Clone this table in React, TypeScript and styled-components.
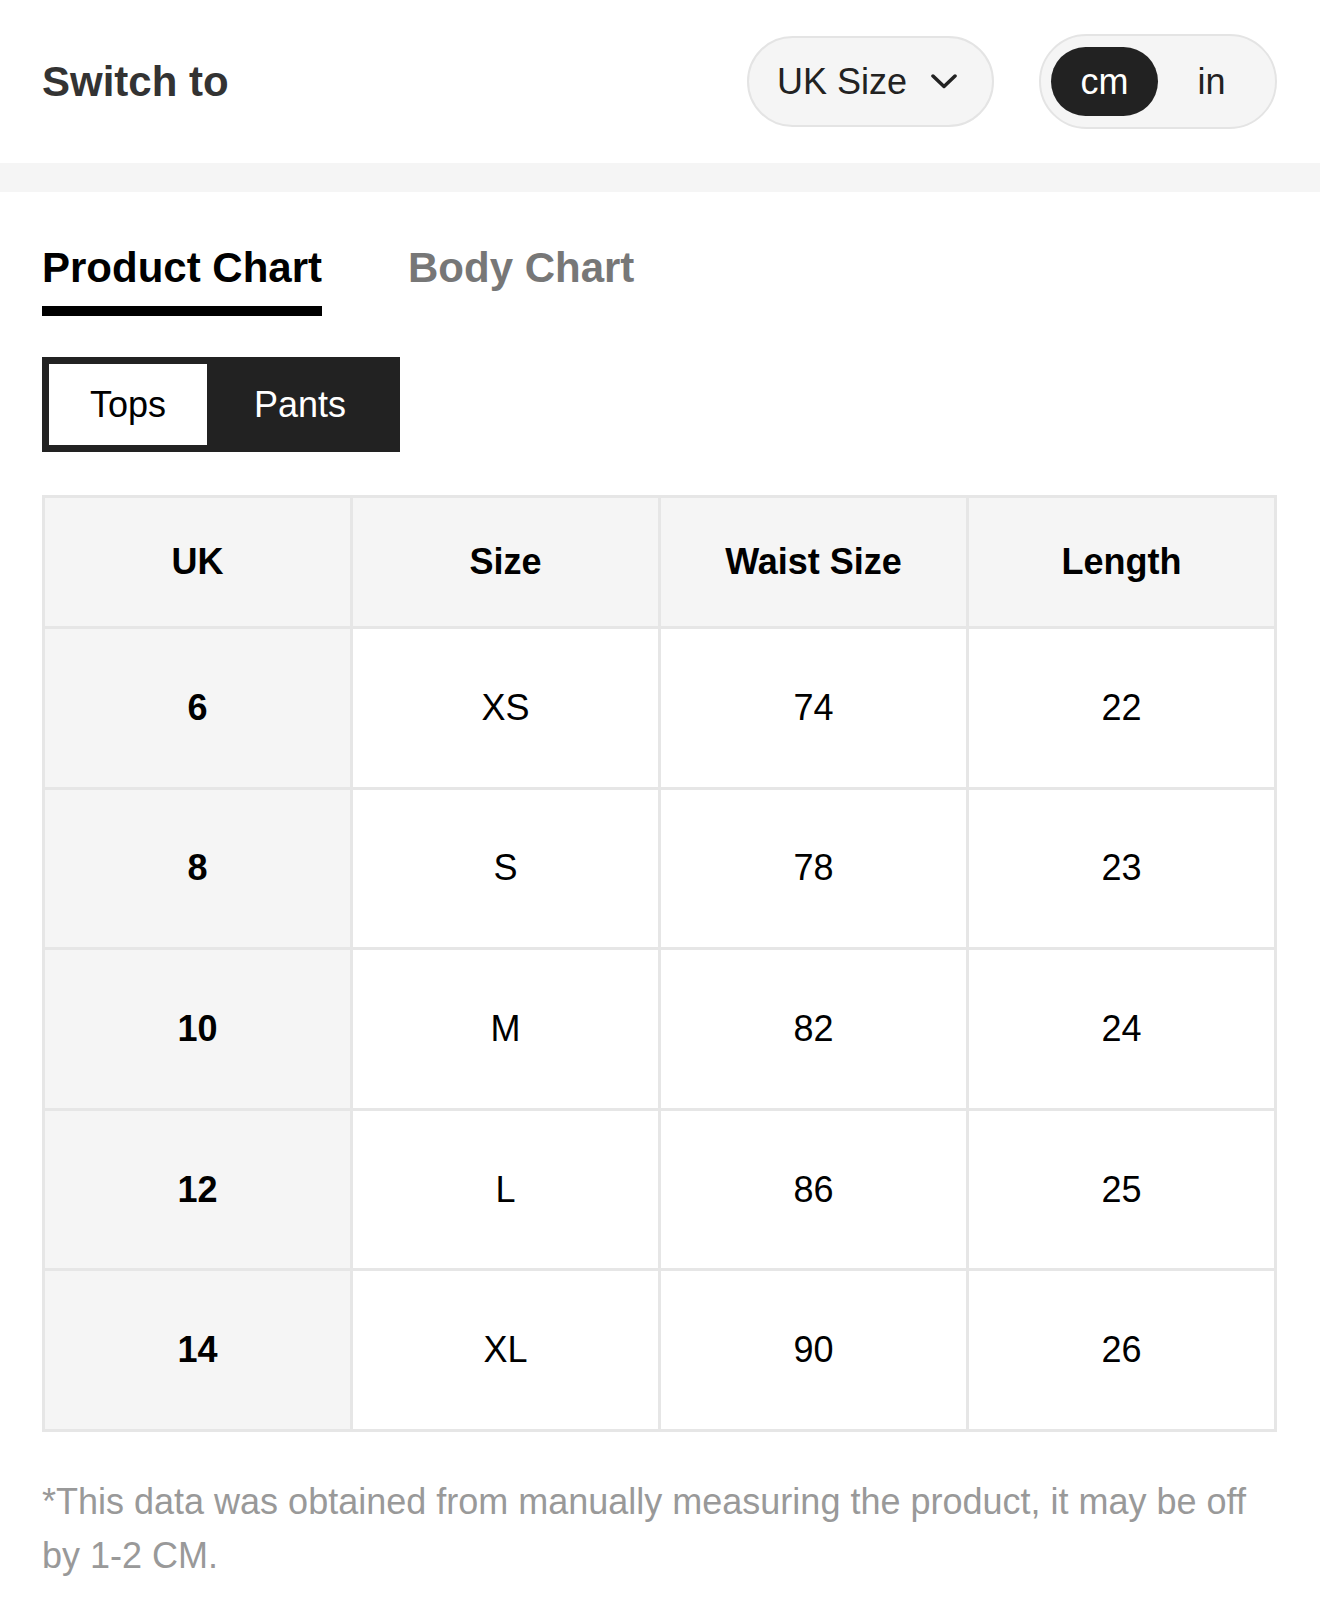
import React from "react";
import styled, { createGlobalStyle } from "styled-components";

const GlobalStyle = createGlobalStyle`
  html, body {
    margin: 0;
    padding: 0;
    background: #ffffff;
  }
  body {
    font-family: "Liberation Sans", Arial, Helvetica, sans-serif;
    color: #000;
  }
  * { box-sizing: border-box; }
`;

const Page = styled.div`
  width: 1320px;
  background: #fff;
`;

const TopBar = styled.header`
  height: 163px;
  display: flex;
  align-items: center;
  justify-content: space-between;
  padding: 0 43px 0 42px;
`;

const Title = styled.h2`
  margin: 0;
  font-size: 42px;
  line-height: 42px;
  font-weight: 700;
  color: #333;
`;

const Controls = styled.div`
  display: flex;
  align-items: center;
  gap: 45px;
`;

const SizeSelect = styled.button`
  height: 91px;
  display: flex;
  align-items: center;
  gap: 24px;
  padding: 0 35px 0 28px;
  border: 2px solid #e4e4e4;
  border-radius: 999px;
  background: #f5f5f5;
  font-family: inherit;
  font-size: 36px;
  color: #222;
  cursor: pointer;
`;

const Chevron = styled.svg`
  display: block;
  width: 26px;
  height: 15px;
`;

const UnitToggle = styled.div`
  display: flex;
  padding: 11px 10px;
  border: 2px solid #e4e4e4;
  border-radius: 999px;
  background: #f5f5f5;
`;

const UnitOption = styled.button<{ $active?: boolean }>`
  width: 107px;
  height: 69px;
  display: flex;
  align-items: center;
  justify-content: center;
  border: none;
  border-radius: 999px;
  padding: 0;
  font-family: inherit;
  font-size: 36px;
  background: ${(p) => (p.$active ? "#222" : "transparent")};
  color: ${(p) => (p.$active ? "#fff" : "#222")};
  cursor: pointer;
`;

const Band = styled.div`
  height: 29px;
  background: #f5f5f5;
`;

const Content = styled.main`
  padding: 0 43px 0 42px;
`;

const Tabs = styled.nav`
  display: flex;
  gap: 86px;
  padding-top: 55px;
`;

const Tab = styled.div<{ $active?: boolean }>`
  font-size: 42px;
  line-height: 42px;
  font-weight: 700;
  color: ${(p) => (p.$active ? "#000" : "#777")};
  padding-bottom: 17px;
  border-bottom: 10px solid ${(p) => (p.$active ? "#000" : "transparent")};
`;

const Segment = styled.div`
  display: inline-flex;
  margin-top: 41px;
  padding: 7px;
  background: #222;
`;

const SegItem = styled.div<{ $active?: boolean }>`
  height: 81px;
  line-height: 81px;
  padding: 0 ${(p) => (p.$active ? "41px" : "47px")};
  font-size: 36px;
  background: ${(p) => (p.$active ? "#fff" : "transparent")};
  color: ${(p) => (p.$active ? "#000" : "#fff")};
`;

const Grid = styled.div`
  margin-top: 43px;
  display: grid;
  grid-template-columns: repeat(4, 1fr);
  border-top: 3px solid #e6e6e6;
  border-left: 3px solid #e6e6e6;
`;

const Cell = styled.div<{ $head?: boolean; $shade?: boolean; $bold?: boolean }>`
  height: ${(p) => (p.$head ? "131px" : "160.6px")};
  display: flex;
  align-items: center;
  justify-content: center;
  border-right: 3px solid #e6e6e6;
  border-bottom: 3px solid #e6e6e6;
  background: ${(p) => (p.$shade ? "#f5f5f5" : "#fff")};
  font-size: 36px;
  font-weight: ${(p) => (p.$bold ? 700 : 400)};
  color: #000;
`;

const Note = styled.p`
  margin: 43px 0 0;
  font-size: 36px;
  line-height: 54px;
  color: #999;
`;

const headers = ["UK", "Size", "Waist Size", "Length"];
const rows = [
  ["6", "XS", "74", "22"],
  ["8", "S", "78", "23"],
  ["10", "M", "82", "24"],
  ["12", "L", "86", "25"],
  ["14", "XL", "90", "26"],
];

export default function App() {
  return (
    <Page>
      <GlobalStyle />
      <TopBar>
        <Title>Switch to</Title>
        <Controls>
          <SizeSelect type="button">
            UK Size
            <Chevron viewBox="0 0 26 15" fill="none">
              <polyline
                points="2,2 13,12.5 24,2"
                stroke="#222"
                strokeWidth="3.5"
                strokeLinecap="round"
                strokeLinejoin="round"
              />
            </Chevron>
          </SizeSelect>
          <UnitToggle>
            <UnitOption type="button" $active>
              cm
            </UnitOption>
            <UnitOption type="button">in</UnitOption>
          </UnitToggle>
        </Controls>
      </TopBar>
      <Band />
      <Content>
        <Tabs>
          <Tab $active>Product Chart</Tab>
          <Tab>Body Chart</Tab>
        </Tabs>
        <Segment>
          <SegItem $active>Tops</SegItem>
          <SegItem>Pants</SegItem>
        </Segment>
        <Grid>
          {headers.map((h) => (
            <Cell key={h} $head $shade $bold>
              {h}
            </Cell>
          ))}
          {rows.map((r) =>
            r.map((v, i) => (
              <Cell key={r[0] + "-" + i} $shade={i === 0} $bold={i === 0}>
                {v}
              </Cell>
            ))
          )}
        </Grid>
        <Note>
          *This data was obtained from manually measuring the product, it may be
          off by 1-2 CM.
        </Note>
      </Content>
    </Page>
  );
}
